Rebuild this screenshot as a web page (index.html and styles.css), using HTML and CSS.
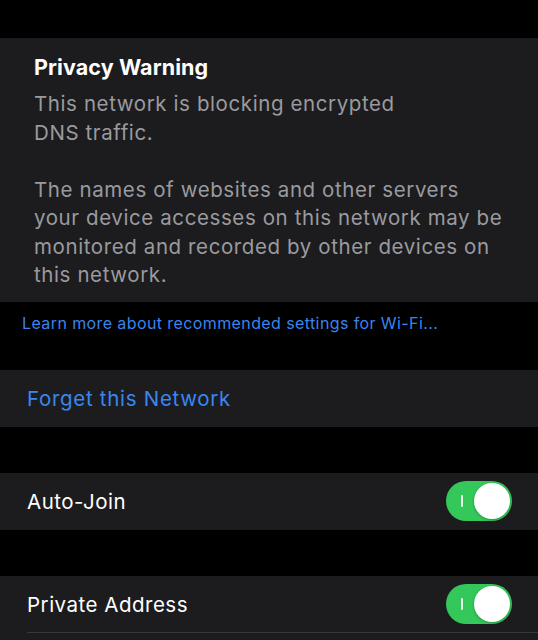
FILE: index.html
```html
<!DOCTYPE html>
<html lang="en">
<head>
<meta charset="utf-8">
<title>Wi-Fi Network</title>
<link rel="stylesheet" href="styles.css">
</head>
<body>
<div class="screen">
  <div class="top-gap"></div>

  <section class="card warning">
    <h2 class="warning-title">Privacy Warning</h2>
    <p class="warning-text">This network is blocking encrypted<br>DNS traffic.</p>
    <p class="warning-text">The names of websites and other servers<br>your device accesses on this network may be<br>monitored and recorded by other devices on<br>this network.</p>
  </section>

  <div class="footer-note">
    <a class="note-link" href="#">Learn more about recommended settings for Wi-Fi...</a>
  </div>

  <section class="card">
    <div class="row"><span class="row-action">Forget this Network</span></div>
  </section>

  <div class="group-gap"></div>

  <section class="card">
    <div class="row">
      <span class="row-label">Auto-Join</span>
      <span class="switch on"><span class="switch-mark"></span><span class="switch-knob"></span></span>
    </div>
  </section>

  <div class="group-gap"></div>

  <section class="card">
    <div class="row divided">
      <span class="row-label">Private Address</span>
      <span class="switch on"><span class="switch-mark"></span><span class="switch-knob"></span></span>
    </div>
    <div class="row"></div>
  </section>
</div>
</body>
</html>
```

FILE: styles.css
```css
* { box-sizing: border-box; }

html, body {
  margin: 0;
  padding: 0;
  background: #000;
}

body {
  font-family: Inter, "Noto Sans", sans-serif;
  color: #fff;
  overflow: hidden;
}

.screen {
  width: 538px;
  height: 640px;
  overflow: hidden;
  display: flex;
  flex-direction: column;
}

.top-gap { height: 38px; flex: none; }
.group-gap { height: 46px; flex: none; }

.card {
  background: #1c1c1e;
  flex: none;
}

.warning {
  padding: 15px 20px 12px 34px;
}

.warning-title {
  margin: 0 0 9px;
  font-size: 21.5px;
  font-weight: 700;
  line-height: 28px;
  letter-spacing: 0.1px;
}

.warning-text {
  margin: 0 0 28.5px;
  font-size: 20.5px;
  line-height: 28.5px;
  color: #9a9a9f;
  letter-spacing: 0.6px;
  white-space: nowrap;
}

.warning-text:last-child { margin-bottom: 0; }

.footer-note {
  height: 68px;
  padding: 10px 0 0 22px;
  flex: none;
}

.note-link {
  font-size: 16px;
  line-height: 22px;
  color: #3b84ef;
  text-decoration: none;
  letter-spacing: 0.4px;
}

.row {
  height: 57px;
  display: flex;
  align-items: center;
  justify-content: space-between;
  padding: 0 26px 0 27px;
  position: relative;
}

.row.divided::after {
  content: "";
  position: absolute;
  left: 27px;
  right: 0;
  bottom: 0;
  height: 1px;
  background: #38383a;
}

.row-action {
  font-size: 20.5px;
  color: #3a86f0;
  letter-spacing: 0.7px;
}

.row-label {
  font-size: 20.5px;
  color: #fff;
  letter-spacing: 0.5px;
}

.switch {
  width: 66px;
  height: 40px;
  border-radius: 20px;
  background: #34c759;
  position: relative;
  flex: none;
}

.switch-mark {
  position: absolute;
  left: 15px;
  top: 14px;
  width: 2px;
  height: 12px;
  background: #e8fbe9;
  border-radius: 1px;
}

.switch-knob {
  position: absolute;
  right: 2px;
  top: 2px;
  width: 36px;
  height: 36px;
  border-radius: 50%;
  background: #fff;
  box-shadow: 0 1px 3px rgba(0, 0, 0, 0.25);
}
```
